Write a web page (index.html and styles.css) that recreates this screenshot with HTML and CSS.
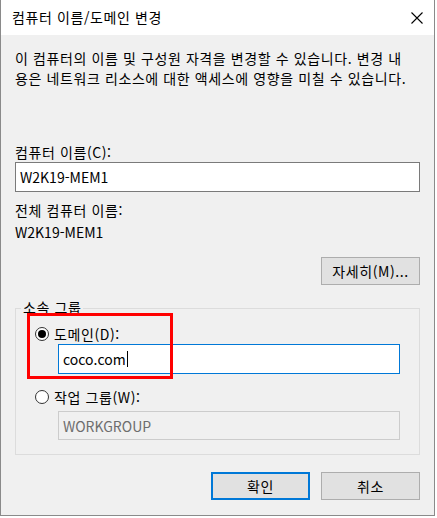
FILE: index.html
```html
<!DOCTYPE html>
<html lang="ko">
<head>
<meta charset="utf-8">
<title>컴퓨터 이름/도메인 변경</title>
<link rel="stylesheet" href="styles.css">
</head>
<body>
<div class="window">
  <div class="titlebar">
    <span class="title">컴퓨터 이름/도메인 변경</span>
    <svg class="close" width="12" height="12" viewBox="0 0 12 12"><path d="M0.5 0.5 L11.5 11.5 M11.5 0.5 L0.5 11.5" stroke="#000" stroke-width="1.1" fill="none"/></svg>
  </div>
  <div class="body">
    <p class="desc">이 컴퓨터의 이름 및 구성원 자격을 변경할 수 있습니다. 변경 내<br>용은 네트워크 리소스에 대한 액세스에 영향을 미칠 수 있습니다.</p>
    <div class="label name-label">컴퓨터 이름(C):</div>
    <div class="input">W2K19-MEM1</div>
    <div class="label full-label">전체 컴퓨터 이름:</div>
    <div class="label full-value">W2K19-MEM1</div>
    <div class="more-row"><div class="btn more">자세히(M)...</div></div>
    <div class="group">
      <div class="group-title">소속 그룹</div>
      <div class="radio-row first"><span class="radio checked"></span><span>도메인(D):</span></div>
      <div class="input sub focused">coco.com<span class="caret"></span></div>
      <div class="radio-row second"><span class="radio"></span><span>작업 그룹(W):</span></div>
      <div class="input sub disabled">WORKGROUP</div>
    </div>
    <div class="actions">
      <div class="btn ok">확인</div>
      <div class="btn">취소</div>
    </div>
  </div>
  <div class="highlight"></div>
</div>
</body>
</html>
```
FILE: styles.css
```css
html, body {
  margin: 0;
  padding: 0;
  background: #ffffff;
}
body {
  font-family: "Noto Sans CJK KR", "Noto Sans", sans-serif;
  font-size: 14px;
  letter-spacing: 0.6px;
  color: #000;
  width: 437px;
  height: 518px;
  overflow: hidden;
}
.window {
  position: relative;
  width: 433px;
  height: 515px;
  border-left: 1px solid #8a8a8a;
  border-right: 1px solid #8a8a8a;
  border-bottom: 1px solid #8a8a8a;
  display: flex;
  flex-direction: column;
  background: #f0f0f0;
}
.titlebar {
  height: 35px;
  background: #ffffff;
  display: flex;
  align-items: center;
  justify-content: space-between;
  padding: 0 11px 0 11px;
}
.title {
  line-height: 20px;
  margin-top: -1px;
}
.close {
  display: block;
  margin-top: 1px;
}
.body {
  flex: 1;
  padding: 13px 14px 0 14px;
  display: flex;
  flex-direction: column;
}
.desc {
  margin: 0;
  line-height: 20px;
}
.label {
  line-height: 20px;
}
.name-label {
  margin-top: 54px;
}
.input {
  height: 30px;
  box-sizing: border-box;
  border: 1px solid #7a7a7a;
  background: #fff;
  padding: 0 4px;
  line-height: 28px;
  display: flex;
  align-items: center;
  letter-spacing: 0;
}
.full-label {
  margin-top: 8px;
}
.full-value {
  margin-top: 2px;
  letter-spacing: 0;
}
.more-row {
  display: flex;
  justify-content: flex-end;
  margin-top: 15px;
}
.btn {
  width: 99px;
  height: 28px;
  box-sizing: border-box;
  border: 1px solid #adadad;
  background: #e1e1e1;
  display: flex;
  align-items: center;
  justify-content: center;
  line-height: 20px;
}
.group {
  margin-top: 23px;
  border: 1px solid #dcdcdc;
  height: 147px;
  box-sizing: border-box;
  padding: 0 19px 0 19px;
  display: flex;
  flex-direction: column;
}
.group-title {
  align-self: flex-start;
  margin-top: -12px;
  margin-left: -14px;
  padding: 0 2px;
  background: #f0f0f0;
  line-height: 20px;
}
.radio-row {
  display: flex;
  align-items: center;
  gap: 5px;
  line-height: 20px;
}
.radio-row.first {
  margin-top: 7px;
}
.radio-row.second {
  margin-top: 13px;
}
.radio {
  width: 14px;
  height: 14px;
  box-sizing: border-box;
  border: 1px solid #333;
  border-radius: 50%;
  background: #fff;
  display: flex;
  align-items: center;
  justify-content: center;
}
.radio.checked::after {
  content: "";
  width: 8px;
  height: 8px;
  border-radius: 50%;
  background: #000;
}
.input.sub {
  margin-left: 23px;
  width: 342px;
}
.input.sub.focused {
  border-color: #0078d7;
}
.caret {
  display: inline-block;
  width: 1px;
  height: 16px;
  background: #000;
  margin-left: 1px;
}
.input.sub.disabled {
  margin-top: 4px;
  height: 29px;
  border-color: #cccccc;
  background: #f0f0f0;
  color: #6d6d6d;
}
.actions {
  display: flex;
  justify-content: flex-end;
  gap: 11px;
  margin-top: 17px;
}
.btn.ok {
  border: 2px solid #0078d7;
}
.highlight {
  position: absolute;
  left: 26px;
  top: 313px;
  width: 140px;
  height: 60px;
  border: 3px solid #ff0000;
}
```
